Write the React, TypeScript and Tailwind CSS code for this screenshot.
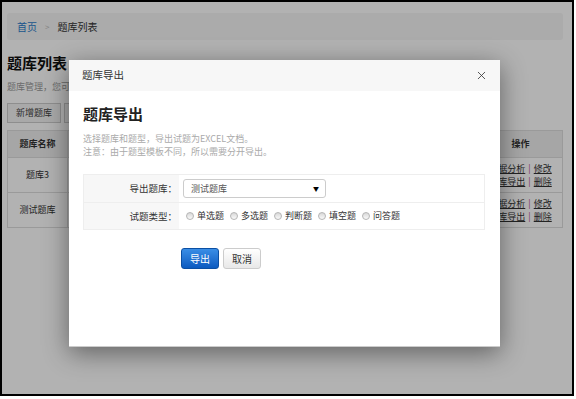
import { X } from "lucide-react";

const font = "font-['Noto_Sans_CJK_SC','Liberation_Sans',sans-serif]";

const rows = [
  { name: "题库3", desc: "BCDEA题库", count: "12", time: "2016-03-01 10:20:31" },
  { name: "测试题库", desc: "内容测试", count: "8", time: "2016-02-18 09:12:45" },
];

const types = ["单选题", "多选题", "判断题", "填空题", "问答题"];

function Radio({ label }: { label: string }) {
  return (
    <label className="flex items-center gap-[3px] mr-[6px]">
      <span className="w-[8px] h-[8px] rounded-full border border-[#b5b5b5] bg-linear-to-b from-[#d8d8d8] to-[#fafafa]" />
      <span>{label}</span>
    </label>
  );
}

function ExportDialog() {
  return (
    <div className="absolute left-[67px] top-[58px] w-[431px] h-[287px] bg-white border-b border-[#ccc] shadow-[0_6px_24px_rgba(0,0,0,0.45)]">
      <div className="h-[31px] bg-[#f7f7f7] flex items-center justify-between pl-[13px] pr-[12px]">
        <span className="text-[10.5px] leading-none text-[#333]">题库导出</span>
        <X size={13} strokeWidth={1.5} className="text-[#333]" />
      </div>

      <div className="px-[14px]">
        <h2 className="mt-[13px] text-[15px] leading-[20px] font-bold text-[#222]">题库导出</h2>
        <div className="mt-[8px] text-[9px] leading-[13px] text-[#aaa]">
          <p>选择题库和题型，导出试题为EXCEL文档。</p>
          <p>注意：由于题型模板不同，所以需要分开导出。</p>
        </div>

        <div className="mt-[16px] w-[402px] border border-[#eee] text-[9px] text-[#333]">
          <div className="flex h-[28px] border-b border-[#eee]">
            <div className="w-[95px] bg-[#f7f7f7] flex items-center justify-end pr-[2px] text-[9.5px]">导出题库：</div>
            <div className="flex items-center pl-[4px]">
              <div className="w-[143px] h-[19px] border border-[#ccc] rounded-[3px] flex items-center justify-between pl-[7px] pr-[6px] text-[#555]">
                <span>测试题库</span>
                <span className="text-[6px] text-black">▼</span>
              </div>
            </div>
          </div>
          <div className="flex h-[26px]">
            <div className="w-[95px] bg-[#f7f7f7] flex items-center justify-end pr-[2px] text-[9.5px]">试题类型：</div>
            <div className="flex items-center pl-[7px]">
              {types.map((t) => (
                <Radio key={t} label={t} />
              ))}
            </div>
          </div>
        </div>

        <div className="mt-[18px] ml-[98px] flex gap-[4px] text-[10px]">
          <button className="w-[38px] h-[21px] rounded-[3px] border border-[#0b4fa3] bg-linear-to-b from-[#3a8ee6] to-[#0a5ac0] text-white">
            导出
          </button>
          <button className="w-[38px] h-[21px] rounded-[3px] border border-[#ccc] bg-linear-to-b from-[#ffffff] to-[#e8e8e8] text-[#333]">
            取消
          </button>
        </div>
      </div>
    </div>
  );
}

export default function App() {
  return (
    <div className={`w-[576px] h-[399px] bg-white ${font}`}>
      <div className="relative w-[574px] h-[396px] border-2 border-black overflow-hidden bg-white">
        <div className="pl-[5px] pr-[9px] pt-[11px] text-[#333]">
          <div className="h-[27px] rounded-[3px] bg-[#f5f5f5] flex items-center pl-[10px] text-[10px]">
            <span className="text-[#2a7ac8]">首页</span>
            <span className="mx-[8px] text-[#bbb] text-[8px]">&gt;</span>
            <span>题库列表</span>
          </div>

          <h1 className="mt-[13px] text-[15px] leading-[20px] font-bold text-[#111]">题库列表</h1>
          <p className="mt-[7px] text-[9px] leading-[14px] text-[#999]">
            题库管理，您可以对题库进行新增、修改、删除和导出操作。
          </p>

          <div className="mt-[9px] flex gap-[3px] text-[9px]">
            <button className="h-[20px] px-[8px] border border-[#ccc] bg-[#f2f2f2] text-[#444]">新增题库</button>
            <button className="h-[20px] px-[8px] border border-[#ccc] bg-[#f2f2f2] text-[#444]">导入试题</button>
          </div>

          <table className="mt-[7px] w-full border-collapse border border-[#ddd] text-[9px]">
            <thead>
              <tr className="h-[27px] bg-[#eee]">
                <th className="w-[60px] border border-[#ddd] font-bold">题库名称</th>
                <th className="border border-[#ddd] font-bold">题库描述</th>
                <th className="border border-[#ddd] font-bold">试题数量</th>
                <th className="border border-[#ddd] font-bold">创建时间</th>
                <th className="w-[84px] border border-[#ddd] font-bold">操作</th>
              </tr>
            </thead>
            <tbody>
              {rows.map((r) => (
                <tr key={r.name} className="h-[35px] bg-white">
                  <td className="border border-[#ddd] text-center">{r.name}</td>
                  <td className="border border-[#ddd] text-center">{r.desc}</td>
                  <td className="border border-[#ddd] text-center">{r.count}</td>
                  <td className="border border-[#ddd] text-center">{r.time}</td>
                  <td className="border border-[#ddd] text-center leading-[13px]">
                    <div>
                      <a className="underline">数据分析</a>
                      <span className="mx-[3px] text-[#b4508a]">|</span>
                      <a className="underline">修改</a>
                    </div>
                    <div>
                      <a className="underline">题库导出</a>
                      <span className="mx-[3px] text-[#b4508a]">|</span>
                      <a className="underline">删除</a>
                    </div>
                  </td>
                </tr>
              ))}
            </tbody>
          </table>
        </div>

        <div className="absolute inset-0 bg-black/30" />
        <ExportDialog />
      </div>
    </div>
  );
}
